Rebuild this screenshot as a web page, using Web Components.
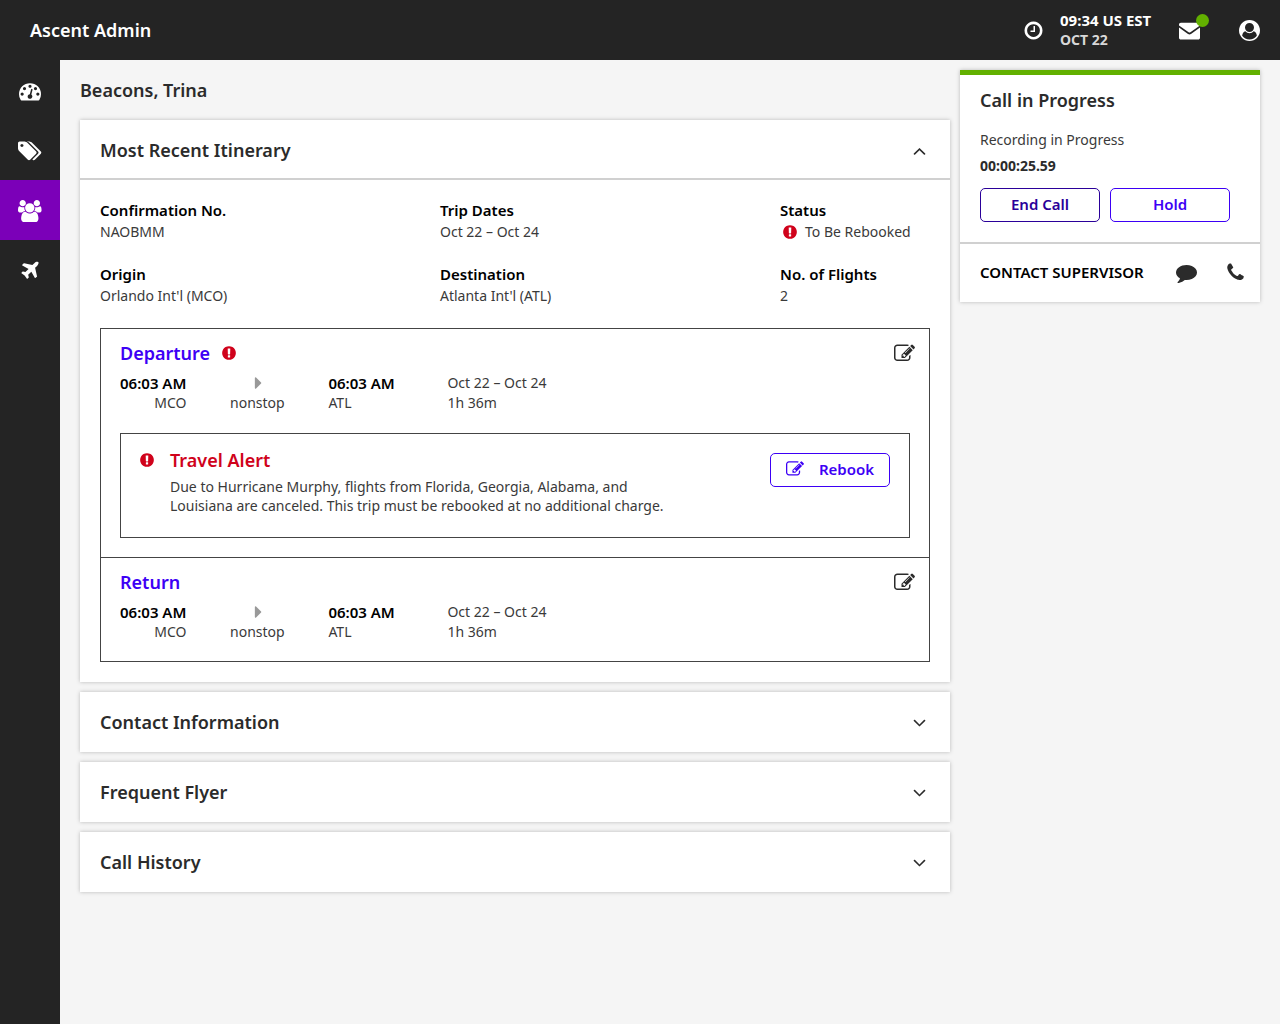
<!DOCTYPE html>
<html lang="en">
<head>
<meta charset="utf-8">
<meta name="viewport" content="width=device-width, initial-scale=1">
<title>Ascent Admin</title>
<style>
  body {
    margin: 0;
    background: #f5f5f5;
    color: #2b2b2b;
    font: 400 14px/20px "Noto Sans", "Open Sans", sans-serif;
    --dark: #242424;
    --purple: #7b00b8;
    --blue: #3d00f5;
    --indigo: #2a0099;
    --red: #d0021b;
    --green: #62b000;
    --line: #444;
    --text: #3a3a3a;
    --rule: #d0d0d0;
    --shadow: 0 0 4px rgba(0, 0, 0, .25);
  }
</style>
</head>
<body>
<admin-app></admin-app>

<script>
const ICONS = {
  gauge: [1792, "M384 1152q0-53-37.5-90.5t-90.5-37.5-90.5 37.5-37.5 90.5 37.5 90.5 90.5 37.5 90.5-37.5 37.5-90.5zm192-448q0-53-37.5-90.5t-90.5-37.5-90.5 37.5-37.5 90.5 37.5 90.5 90.5 37.5 90.5-37.5 37.5-90.5zm428 481l101-382q6-26-7.5-48.5t-38.5-29.5-48 6.5-30 39.5l-101 382q-60 5-107 43.5t-63 98.5q-20 77 20 146t117 89 146-20 89-117q16-60-6-117t-72-91zm660-33q0-53-37.5-90.5t-90.5-37.5-90.5 37.5-37.5 90.5 37.5 90.5 90.5 37.5 90.5-37.5 37.5-90.5zm-640-640q0-53-37.5-90.5t-90.5-37.5-90.5 37.5-37.5 90.5 37.5 90.5 90.5 37.5 90.5-37.5 37.5-90.5zm448 192q0-53-37.5-90.5t-90.5-37.5-90.5 37.5-37.5 90.5 37.5 90.5 90.5 37.5 90.5-37.5 37.5-90.5zm320 448q0 261-141 483-19 29-54 29h-1402q-35 0-54-29-141-221-141-483 0-182 71-348t191-286 286-191 348-71 348 71 286 191 191 286 71 348z"],
  tags: [1920, "M448 448q0-53-37.5-90.5t-90.5-37.5-90.5 37.5-37.5 90.5 37.5 90.5 90.5 37.5 90.5-37.5 37.5-90.5zm1067 576q0 53-37 90l-491 492q-39 37-91 37-53 0-90-37l-715-716q-38-37-64.5-101t-26.5-117v-416q0-52 38-90t90-38h416q53 0 117 26.5t102 64.5l715 714q37 39 37 91zm384 0q0 53-37 90l-491 492q-39 37-91 37-36 0-59-14t-53-45l470-470q37-37 37-90 0-52-37-91l-715-714q-38-38-102-64.5t-117-26.5h224q53 0 117 26.5t102 64.5l715 714q37 39 37 91z"],
  users: [1920, "M593 896q-162 5-265 128h-134q-82 0-138-40.5t-56-118.5q0-353 124-353 6 0 43.5 21t97.5 42.5 119 21.5q67 0 133-23-5 37-5 66 0 139 81 256zm1071 637q0 120-73 189.5t-194 69.5h-874q-121 0-194-69.5t-73-189.5q0-53 3.5-103.5t14-109 26.5-108.5 43-97.5 62-81 85.5-53.5 111.5-20q10 0 43 21.5t73 48 107 48 135 21.5 135-21.5 107-48 73-48 43-21.5q61 0 111.5 20t85.5 53.5 62 81 43 97.5 26.5 108.5 14 109 3.5 103.5zm-1024-1277q0 106-75 181t-181 75-181-75-75-181 75-181 181-75 181 75 75 181zm704 384q0 159-112.5 271.5t-271.5 112.5-271.5-112.5-112.5-271.5 112.5-271.5 271.5-112.5 271.5 112.5 112.5 271.5zm576 225q0 78-56 118.5t-138 40.5h-134q-103-123-265-128 81-117 81-256 0-29-5-66 66 23 133 23 59 0 119-21.5t97.5-42.5 43.5-21q124 0 124 353zm-128-609q0 106-75 181t-181 75-181-75-75-181 75-181 181-75 181 75 75 181z"],
  plane: [1792, "M1568 160q44 52 12 148t-108 172l-161 161 160 696q5 19-12 33l-128 96q-7 6-19 6-4 0-7-1-15-3-21-16l-279-508-259 259 53 194q5 17-8 31l-96 96q-9 9-23 9h-2q-15-2-24-13l-189-252-252-189q-11-7-13-23-1-13 9-25l96-97q9-9 23-9 6 0 8 1l194 53 259-259-508-279q-14-8-17-24-2-16 9-27l128-128q14-13 30-8l665 159 160-160q76-76 172-108t148 12z"],
  clock: [1792, "M1024 544v448q0 14-9 23t-23 9h-320q-14 0-23-9t-9-23v-64q0-14 9-23t23-9h224v-352q0-14 9-23t23-9h64q14 0 23 9t9 23zm416 352q0-148-73-273t-198-198-273-73-273 73-198 198-73 273 73 273 198 198 273 73 273-73 198-198 73-273zm224 0q0 209-103 385.5t-279.5 279.5-385.5 103-385.5-103-279.5-279.5-103-385.5 103-385.5 279.5-279.5 385.5-103 385.5 103 279.5 279.5 103 385.5z"],
  envelope: [1792, "M1792 650v860q0 66-47 113t-113 47h-1472q-66 0-113-47t-47-113v-860l770 550q126 80 252 0zM1792 470l-820 580q-76 50-152 0l-820-580v-80q0-66 47-113t113-47h1472q66 0 113 47t47 113z"],
  user: [1792, "M1523 1339q-22-155-87.5-257.5t-184.5-118.5q-67 74-159.5 115.5t-195.5 41.5-195.5-41.5-159.5-115.5q-119 16-184.5 118.5t-87.5 257.5q106 150 271 237.5t356 87.5 356-87.5 271-237.5zm-243-699q0-159-112.5-271.5t-271.5-112.5-271.5 112.5-112.5 271.5 112.5 271.5 271.5 112.5 271.5-112.5 112.5-271.5zm512 256q0 182-71 347.5t-190.5 286-285.5 191.5-349 71q-182 0-348-71t-286-191-191-286-71-348 71-348 191-286 286-191 348-71 348 71 286 191 191 286 71 348z"],
  alert: [1792, "M896 128q209 0 385.5 103t279.5 279.5 103 385.5-103 385.5-279.5 279.5-385.5 103-385.5-103-279.5-279.5-103-385.5 103-385.5 279.5-279.5 385.5-103zm128 1247v-190q0-14-9-23.5t-22-9.5h-192q-13 0-23 10t-10 23v190q0 13 10 23t23 10h192q13 0 22-9.5t9-23.5zm-2-344l18-621q0-12-10-18-10-8-24-8h-220q-14 0-24 8-10 6-10 18l17 621q0 10 10 17.5t24 7.5h185q14 0 23.5-7.5t10.5-17.5z"],
  edit: [1792, "M888 1184l116-116-152-152-116 116v56h96v96h56zm440-720q-16-16-33 1l-350 350q-17 17-1 33t33-1l350-350q17-17 1-33zm80 594v190q0 119-84.5 203.5t-203.5 84.5h-832q-119 0-203.5-84.5t-84.5-203.5v-832q0-119 84.5-203.5t203.5-84.5h832q63 0 117 25 15 7 18 23 3 17-9 29l-49 49q-14 14-32 8-23-6-45-6h-832q-66 0-113 47t-47 113v832q0 66 47 113t113 47h832q66 0 113-47t47-113v-126q0-13 9-22l64-64q15-15 35-7t20 29zm-96-738l288 288-672 672h-288v-288zm444 132l-92 92-288-288 92-92q28-28 68-28t68 28l152 152q28 28 28 68t-28 68z"],
  comment: [1792, "M1792 896q0 174-120 321.5t-326 233-450 85.5q-70 0-145-8-198 175-460 242-49 14-114 22-17 2-30.5-9t-17.5-29v-1q-3-4-.5-12t2-10 4.5-9.5l6-9 7-8.5 8-9q7-8 31-34.5t34.5-38 31-39.5 32.5-51 27-59 26-76q-157-89-247.5-220t-90.5-281q0-130 71-248.5t191-204.5 286-136.5 348-50.5q244 0 450 85.5t326 233 120 321.5z"],
  phone: [1792, "M1600 1240q0 27-10 70.5t-21 68.5q-21 50-122 106-94 51-186 51-27 0-53-3.5t-57.5-12.5-47-14.5-55.5-20.5-49-18q-98-35-175-83-127-79-264-216t-216-264q-48-77-83-175-3-9-18-49t-20.5-55.5-14.5-47-12.5-57.5-3.5-53q0-92 51-186 56-101 106-122 25-11 68.5-21t70.5-10q14 0 21 3 18 6 53 76 11 19 30 54t35 63.5 31 53.5q3 4 17.5 25t21.5 35.5 7 28.5q0 20-28.5 50t-62 55-62 53-28.5 46q0 9 5 22.5t8.5 20.5 14 24 11.5 19q76 137 174 235t235 174q2 1 19 11.5t24 14 20.5 8.5 22.5 5q18 0 46-28.5t53-62 55-62 50-28.5q14 0 28.5 7t35.5 21.5 25 17.5q25 15 53.5 31t63.5 35 54 30q70 35 76 53 3 7 3 21z"],
  caret: [1792, "M1280 896q0 26-19 45l-448 448q-19 19-45 19t-45-19-19-45v-896q0-26 19-45t45-19 45 19l448 448q19 19 19 45z"],
  up: [1792, "M1395 1184q0 13-10 23l-50 50q-10 10-23 10t-23-10l-393-393-393 393q-10 10-23 10t-23-10l-50-50q-10-10-10-23t10-23l466-466q10-10 23-10t23 10l466 466q10 10 10 23z"],
  down: [1792, "M1395 736q0 13-10 23l-466 466q-10 10-23 10t-23-10l-466-466q-10-10-10-23t10-23l50-50q10-10 23-10t23 10l393 393 393-393q10-10 23-10t23 10l50 50q10 10 10 23z"]
};

const RESET = `
  *, *::before, *::after { box-sizing: border-box; }
  h1, h2, h3, p, dl, dd, ul { margin: 0; padding: 0; }
  button { font: inherit; color: inherit; background: none; border: 0; padding: 0; margin: 0; cursor: pointer; }
`;

function define(name, css, html) {
  customElements.define(name, class extends HTMLElement {
    constructor() {
      super();
      const root = this.attachShadow({ mode: "open" });
      root.innerHTML = `<style>${RESET}${css}</style>${typeof html === "function" ? html(this) : html}`;
    }
  });
}

define("ui-icon", `
  :host { display: inline-flex; flex: none; height: var(--icon, 21px); }
  svg { display: block; height: 100%; width: auto; fill: currentColor; overflow: visible; }
`, el => {
  const [w, d] = ICONS[el.getAttribute("name")];
  return `<svg viewBox="0 0 ${w} 1792" aria-hidden="true"><path d="${d}"/></svg>`;
});

define("outline-button", `
  :host { display: block; width: 120px; color: var(--blue); }
  :host([dark]) { color: var(--indigo); }
  button { display: flex; align-items: center; justify-content: center; gap: 15px; width: 100%; height: 34px; padding-bottom: 2px;
    border: 1px solid currentColor; border-radius: 5px; background: #fff; font-size: 15px; font-weight: 600; }
`, `<button type="button"><slot></slot></button>`);

define("top-bar", `
  :host { display: block; background: var(--dark); color: #fff; }
  header { display: flex; align-items: center; height: 60px; padding: 0 20px 0 30px; }
  h1 { font-size: 18px; line-height: 24px; font-weight: 600; margin-right: auto; }
  .time { font-size: 15px; font-weight: 700; line-height: 19px; margin: 0 26px 0 16px; min-width: 93px; }
  .date { color: #d8d8d8; font-size: 14px; }
  button { display: flex; position: relative; }
  .mail { margin-right: 39px; }
  .dot { position: absolute; right: -9px; top: -6px; width: 13px; height: 13px; border-radius: 50%; background: var(--green); }
`, `<header>
  <h1>Ascent Admin</h1>
  <ui-icon name="clock"></ui-icon>
  <div class="time"><div>09:34 US EST</div><div class="date">OCT 22</div></div>
  <button class="mail" type="button" aria-label="Messages"><ui-icon name="envelope"></ui-icon><span class="dot"></span></button>
  <button type="button" aria-label="Account"><ui-icon name="user"></ui-icon></button>
</header>`);

define("side-nav", `
  :host { display: block; width: 60px; flex: none; background: var(--dark); color: #fff; --icon: 22px; }
  a { display: flex; align-items: center; justify-content: center; height: 60px; padding-top: 1px; color: inherit; }
  a[aria-current] { background: var(--purple); }
`, `<nav>
  <a href="#dashboard" aria-label="Dashboard"><ui-icon name="gauge"></ui-icon></a>
  <a href="#offers" aria-label="Offers"><ui-icon name="tags"></ui-icon></a>
  <a href="#customers" aria-label="Customers" aria-current="page"><ui-icon name="users"></ui-icon></a>
  <a href="#flights" aria-label="Flights"><ui-icon name="plane"></ui-icon></a>
</nav>`);

define("accordion-card", `
  :host { display: block; background: #fff; box-shadow: var(--shadow); }
  h2 { font: inherit; }
  button { display: flex; align-items: center; justify-content: space-between; width: 100%; height: 60px; padding: 0 20px;
    font-size: 18px; line-height: 24px; font-weight: 600; text-align: left; }
  :host([open]) button { box-shadow: inset 0 -2px var(--rule); }
  .body { padding: 20px; }
`, el => {
  const open = el.hasAttribute("open");
  return `<h2><button type="button" aria-expanded="${open}"><slot name="title"></slot><ui-icon name="${open ? "up" : "down"}"></ui-icon></button></h2>
  ${open ? `<div class="body"><slot></slot></div>` : ""}`;
});

define("trip-facts", `
  :host { display: block; }
  dl { display: grid; grid-template-columns: 340fr 340fr 150fr; row-gap: 22px; padding-bottom: 22px; }
  dt { font-size: 15px; font-weight: 600; color: #000; line-height: 21px; }
  dd { line-height: 21px; display: flex; align-items: center; gap: 7px; white-space: nowrap; color: var(--text); }
  ui-icon { --icon: 16px; color: var(--red); margin-left: 2px; }
`, `<dl>
  <div><dt>Confirmation No.</dt><dd>NAOBMM</dd></div>
  <div><dt>Trip Dates</dt><dd>Oct 22 – Oct 24</dd></div>
  <div><dt>Status</dt><dd><ui-icon name="alert"></ui-icon>To Be Rebooked</dd></div>
  <div><dt>Origin</dt><dd>Orlando Int'l (MCO)</dd></div>
  <div><dt>Destination</dt><dd>Atlanta Int'l (ATL)</dd></div>
  <div><dt>No. of Flights</dt><dd>2</dd></div>
</dl>`);

define("flight-leg", `
  :host { display: block; border: 1px solid var(--line); padding: 12px 19px 19px; }
  :host(:not(:first-of-type)) { border-top: 0; }
  .head { display: flex; align-items: center; gap: 11px; height: 24px; margin-right: -5px; }
  h3 { font-size: 18px; line-height: 24px; font-weight: 600; color: var(--blue); }
  .head > ui-icon { --icon: 16px; color: var(--red); }
  .head button { display: flex; margin-left: auto; }
  .route { display: flex; line-height: 20px; margin-top: 8px; color: var(--text); }
  .route > div { flex: none; }
  .from { text-align: right; }
  .via { width: 142px; display: flex; flex-direction: column; align-items: center; }
  .via ui-icon { --icon: 20px; color: #999; }
  .to { width: 119px; }
  strong { display: block; color: #000; font-size: 15px; font-weight: 600; }
`, el => `<div class="head"><h3><slot name="name"></slot></h3>${el.hasAttribute("alert") ? `<ui-icon name="alert"></ui-icon>` : ""}
  <button type="button" aria-label="Edit flight"><ui-icon name="edit"></ui-icon></button></div>
  <div class="route">
    <div class="from"><strong>06:03 AM</strong>MCO</div>
    <div class="via"><ui-icon name="caret"></ui-icon>nonstop</div>
    <div class="to"><strong>06:03 AM</strong>ATL</div>
    <div><div>Oct 22 – Oct 24</div><div>1h 36m</div></div>
  </div>
  <slot></slot>`);

define("travel-alert", `
  :host { display: flex; align-items: flex-start; gap: 15px; margin-top: 20px; border: 1px solid var(--line); padding: 14px 19px 22px 18px; min-height: 105px; }
  ui-icon { --icon: 16px; color: var(--red); margin-top: 4px; }
  .text { flex: 1; }
  h3 { font-size: 18px; line-height: 24px; font-weight: 600; color: var(--red); }
  p { max-width: 520px; line-height: 19px; margin-top: 5px; color: var(--text); }
  outline-button { margin-top: 5px; }
  outline-button ui-icon { --icon: 18px; color: inherit; margin: 0; }
`, `<ui-icon name="alert"></ui-icon>
  <div class="text"><h3>Travel Alert</h3>
  <p>Due to Hurricane Murphy, flights from Florida, Georgia, Alabama, and Louisiana are canceled. This trip must be rebooked at no additional charge.</p></div>
  <outline-button><ui-icon name="edit"></ui-icon>Rebook</outline-button>`);

define("call-panel", `
  :host { display: block; background: #fff; border-top: 5px solid var(--green); box-shadow: var(--shadow); }
  .call { padding: 13px 20px 20px; border-bottom: 2px solid var(--rule); }
  h2 { font-size: 18px; line-height: 24px; font-weight: 600; margin-bottom: 18px; }
  p { color: var(--text); }
  .timer { font-weight: 700; color: inherit; margin: 6px 0 12px; }
  .buttons { display: flex; gap: 10px; }
  .contact { display: flex; align-items: center; height: 58px; padding: 0 14px 2px 20px; color: #000; }
  .contact span { font-size: 15px; font-weight: 600; margin-right: auto; }
  .contact button { display: flex; margin-left: 28px; color: #2b2b2b; }
`, `<div class="call">
    <h2>Call in Progress</h2>
    <p>Recording in Progress</p>
    <p class="timer">00:00:25.59</p>
    <div class="buttons"><outline-button dark>End Call</outline-button><outline-button>Hold</outline-button></div>
  </div>
  <div class="contact"><span>CONTACT SUPERVISOR</span>
    <button type="button" aria-label="Message supervisor"><ui-icon name="comment"></ui-icon></button>
    <button type="button" aria-label="Call supervisor"><ui-icon name="phone"></ui-icon></button>
  </div>`);

define("admin-app", `
  :host { display: flex; flex-direction: column; min-height: 100vh; }
  .shell { display: flex; flex: 1; }
  .page { display: flex; flex: 1; align-items: flex-start; gap: 10px; padding: 10px 20px; min-width: 0; }
  main { flex: 1; min-width: 0; display: flex; flex-direction: column; gap: 10px; }
  h1 { font-size: 18px; line-height: 40px; font-weight: 600; }
  call-panel { flex: 0 0 300px; }
`, `<top-bar></top-bar>
<div class="shell">
  <side-nav></side-nav>
  <div class="page">
    <main>
      <h1>Beacons, Trina</h1>
      <accordion-card open>
        <span slot="title">Most Recent Itinerary</span>
        <trip-facts></trip-facts>
        <flight-leg alert><span slot="name">Departure</span><travel-alert></travel-alert></flight-leg>
        <flight-leg><span slot="name">Return</span></flight-leg>
      </accordion-card>
      <accordion-card><span slot="title">Contact Information</span></accordion-card>
      <accordion-card><span slot="title">Frequent Flyer</span></accordion-card>
      <accordion-card><span slot="title">Call History</span></accordion-card>
    </main>
    <call-panel></call-panel>
  </div>
</div>`);
</script>
</body>
</html>
